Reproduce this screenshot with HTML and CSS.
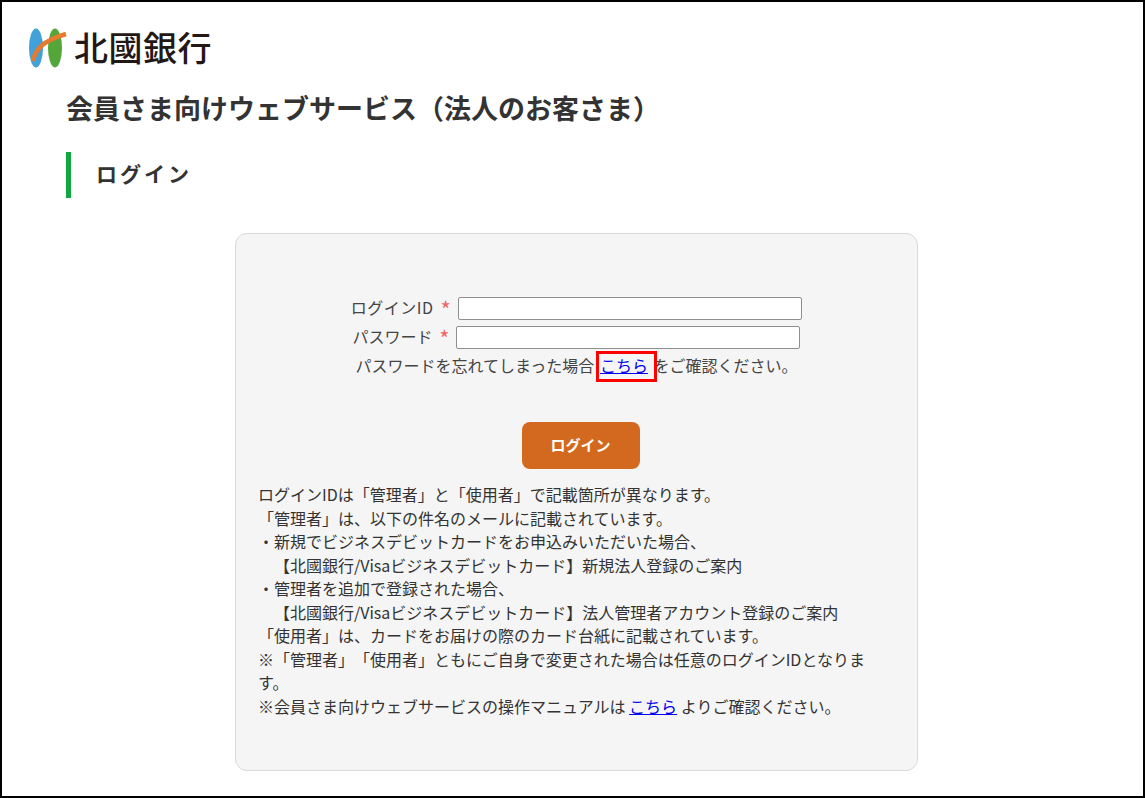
FILE: index.html
```html
<!DOCTYPE html>
<html lang="ja">
<head>
<meta charset="utf-8">
<title>ログイン</title>
<link rel="stylesheet" href="styles.css">
</head>
<body>
<div class="frame">
  <header class="logo">
    <svg class="mark" width="38" height="40" viewBox="0 0 38 40" aria-hidden="true">
      <ellipse cx="7" cy="20" rx="7" ry="19.500" fill="#42a1d8"/>
      <ellipse cx="26" cy="20" rx="7" ry="19.500" fill="#55a63a"/>
      <path d="M4 33 C6 22 13 13 37 6" fill="none" stroke="#e57a30" stroke-width="4.500"/>
    </svg>
    <span class="logo-text">北國銀行</span>
  </header>
  <h1 class="title">会員さま向けウェブサービス（法人のお客さま）</h1>
  <h2 class="section">ログイン</h2>
  <main class="card">
    <div class="row row-id"><label>ログインID <span class="req">*</span></label> <input type="text"></div>
    <div class="row row-pw"><label>パスワード <span class="req">*</span></label> <input type="password"></div>
    <p class="forgot">パスワードを忘れてしまった場合 <span class="mark-box"><a href="#">こちら</a></span> をご確認ください。</p>
    <div class="actions"><button type="button" class="login">ログイン</button></div>
    <div class="notes">
      <p>ログインIDは「管理者」と「使用者」で記載箇所が異なります。</p>
      <p>「管理者」は、以下の件名のメールに記載されています。</p>
      <p>・新規でビジネスデビットカードをお申込みいただいた場合、</p>
      <p class="indent">【北國銀行/Visaビジネスデビットカード】新規法人登録のご案内</p>
      <p>・管理者を追加で登録された場合、</p>
      <p class="indent">【北國銀行/Visaビジネスデビットカード】法人管理者アカウント登録のご案内</p>
      <p>「使用者」は、カードをお届けの際のカード台紙に記載されています。</p>
      <p>※「管理者」「使用者」ともにご自身で変更された場合は任意のログインIDとなります。</p>
      <p>※会員さま向けウェブサービスの操作マニュアルは <a href="#">こちら</a> よりご確認ください。</p>
    </div>
  </main>
</div>
</body>
</html>
```
FILE: styles.css
```css
* { box-sizing: border-box; }
html, body { margin: 0; padding: 0; }
body {
  font-family: "Noto Sans CJK JP", "Noto Sans", sans-serif;
  color: #333;
  background: #fff;
  text-spacing-trim: space-all;
}
.frame {
  width: 1145px;
  height: 798px;
  overflow: hidden;
  border: 2px solid #000;
  padding: 26px 0 0 64px;
}
.logo {
  display: flex;
  align-items: center;
  gap: 7px;
  height: 40px;
  margin-left: -37px;
}
.mark { display: block; flex: none; }
.logo-text {
  font-size: 34px;
  line-height: 38px;
  font-weight: 500;
  color: #231815;
  letter-spacing: .5px;
  padding-bottom: 2px;
}
.title {
  margin: 20px 0 0;
  font-size: 27px;
  line-height: 40px;
  font-weight: 700;
  color: #333;
}
.section {
  margin: 24px 0 0;
  height: 46px;
  border-left: 5px solid #0fa83f;
  padding-left: 25px;
  font-size: 21px;
  line-height: 42px;
  font-weight: 700;
  letter-spacing: 3px;
  color: #333;
}
.card {
  width: 683px;
  height: 538px;
  margin: 35px 0 0 169px;
  padding: 60px 22px 0;
  background: #f5f5f5;
  border: 1px solid #d9d9d9;
  border-radius: 12px;
  font-size: 16px;
  line-height: 24px;
}
.row, .forgot { text-align: center; color: #444; }
.row { height: 29px; display: flex; justify-content: center; align-items: center; }
.row label { margin: 0 7px 3px 0; }
.row-id label { letter-spacing: .5px; }
.row input {
  width: 344px;
  height: 23px;
  padding: 0 4px;
  background: #fff;
  border: 1px solid #8f8f8f;
  border-radius: 2px;
}
.req {
  color: #ee6468;
  margin-left: 3px;
  font-size: 22px;
  line-height: 0;
  vertical-align: -4px;
}
.forgot { margin: 0; line-height: 26px; word-spacing: 2px; }
.mark-box { position: relative; }
.mark-box::after {
  content: "";
  position: absolute;
  left: -4px;
  right: -9px;
  top: -2px;
  bottom: -5px;
  border: 3px solid #f00;
}
a { color: #0000ee; }
.actions { margin-top: 44px; padding-left: 8px; display: flex; justify-content: center; }
.login {
  width: 118px;
  height: 47px;
  padding: 0 0 3px;
  border: 0;
  border-radius: 8px;
  background: #d2691e;
  color: #fff;
  font: 700 15px/1.4 "Noto Sans CJK JP", sans-serif;
}
.notes { width: 612px; margin-top: 14px; line-height: 23.550px; color: #333; }
.notes p { margin: 0; }
.notes .indent { padding-left: 16px; }
```
